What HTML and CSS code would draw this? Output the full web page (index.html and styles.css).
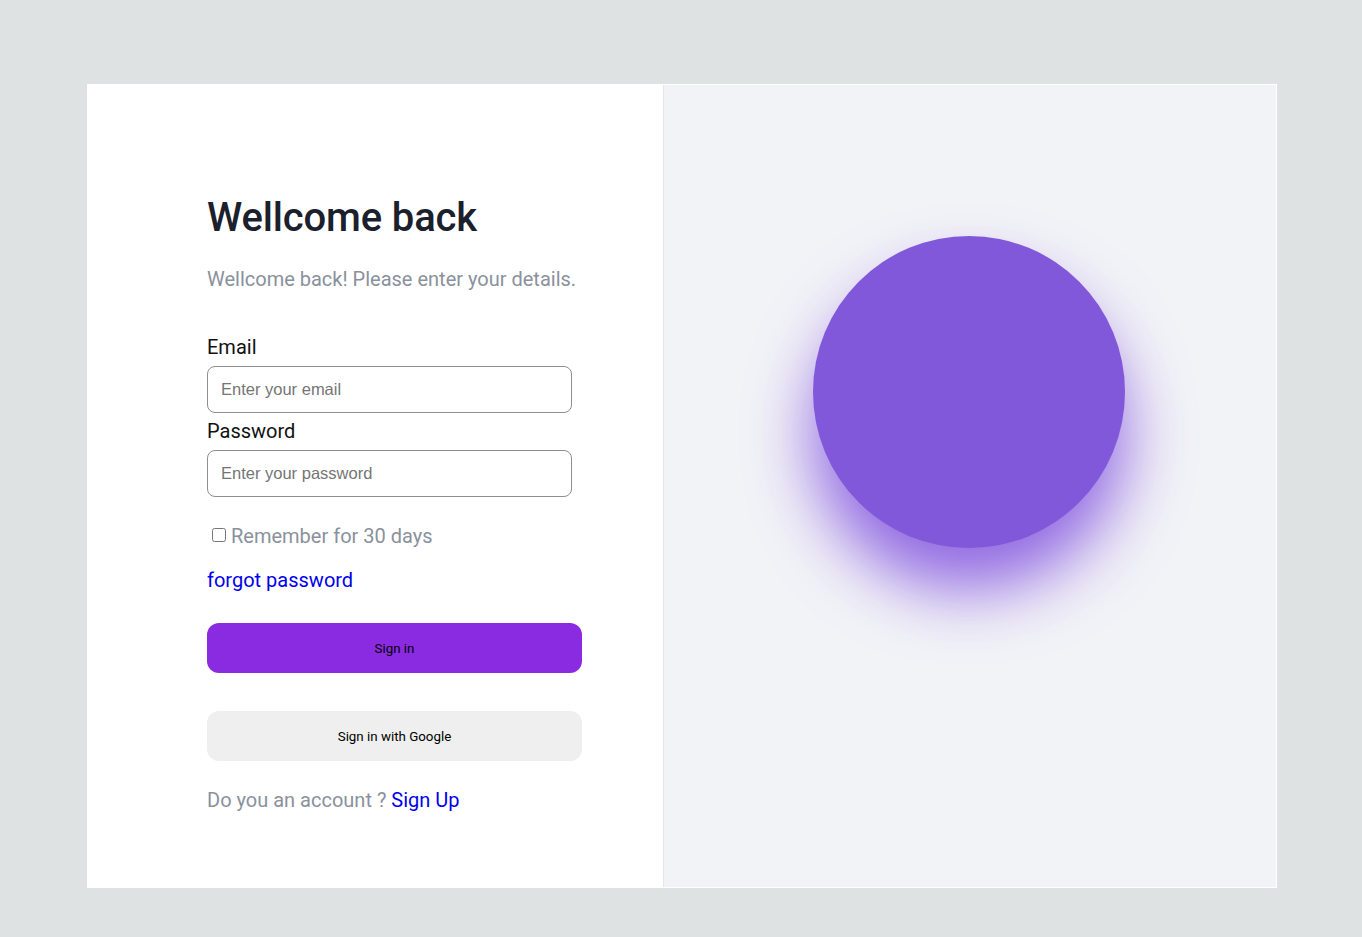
FILE: index.html
```html
<!DOCTYPE html>
<html lang="en">
<head>
<meta charset="utf-8">
<title>Sign in</title>
<link rel="stylesheet" href="styles.css">
</head>
<body>
<main class="card">
  <section class="form-pane">
    <h1 class="title">Wellcome back</h1>
    <p class="subtitle">Wellcome back! Please enter your details.</p>
    <form class="form">
      <label class="label" for="email">Email</label>
      <input class="input" id="email" type="email" placeholder="Enter your email">
      <label class="label" for="password">Password</label>
      <input class="input" id="password" type="password" placeholder="Enter your password">
      <label class="remember"><input type="checkbox" class="check"><span>Remember for 30 days</span></label>
      <a class="link forgot" href="#">forgot password</a>
      <button type="button" class="btn btn-primary">Sign in</button>
      <button type="button" class="btn btn-google">Sign in with Google</button>
      <p class="signup">Do you an account ? <a class="link" href="#">Sign Up</a></p>
    </form>
  </section>
  <section class="art-pane">
    <div class="orb"></div>
  </section>
</main>
</body>
</html>
```

FILE: styles.css
```css
html, body {
  margin: 0;
  padding: 0;
}
body {
  background: #dfe2e3;
  font-family: Roboto, "Liberation Sans", sans-serif;
  min-height: 937px;
}
.card {
  width: 1190px;
  height: 804px;
  margin: 84px 0 0 87px;
  background: #ffffff;
  display: flex;
  box-sizing: border-box;
  padding: 1px 1px 1px 0;
}
.form-pane {
  width: 576px;
  flex: none;
  box-sizing: border-box;
  padding: 109px 0 0 120px;
}
.title {
  margin: 0;
  font-size: 40px;
  line-height: 48px;
  font-weight: 500;
  color: #1a202c;
  letter-spacing: -0.15px;
}
.subtitle {
  margin: 23px 0 0;
  font-size: 20px;
  line-height: 28px;
  color: #8a919d;
}
.form {
  display: flex;
  flex-direction: column;
  align-items: flex-start;
  margin-top: 40px;
}
.label {
  font-size: 20px;
  line-height: 28px;
  color: #111111;
  margin-bottom: 5px;
}
.input {
  width: 365px;
  height: 47px;
  box-sizing: border-box;
  border: 1px solid #8f8f8f;
  border-radius: 8px;
  padding: 0 13px;
  font-family: "Liberation Sans", Arial, sans-serif;
  font-size: 16.5px;
  margin: 0 0 4px;
  background: #fff;
}
.input::placeholder {
  color: #757575;
}
.remember {
  display: flex;
  align-items: center;
  margin-top: 21px;
  font-size: 20px;
  line-height: 28px;
  color: #8a919d;
}
.check {
  width: 14px;
  height: 14px;
  margin: 0 5px 0 5px;
  position: relative;
  top: -1px;
}
.link {
  color: #0000ee;
  text-decoration: none;
}
.forgot {
  margin-top: 16px;
  font-size: 20px;
  line-height: 28px;
}
.btn {
  width: 375px;
  height: 50px;
  border: none;
  border-radius: 12px;
  font-family: Roboto, "Liberation Sans", Arial, sans-serif;
  font-size: 13.333px;
  color: #000;
  cursor: pointer;
}
.btn-primary {
  margin-top: 29px;
  background: #8a2be2;
}
.btn-google {
  margin-top: 38px;
  background: #efefef;
}
.signup {
  margin: 25px 0 0;
  font-size: 20px;
  line-height: 28px;
  color: #8a919d;
}
.art-pane {
  flex: 1;
  background: #f2f3f7;
  border-left: 1px solid #e6e7ea;
  display: flex;
  justify-content: center;
  align-items: flex-start;
  padding-top: 151px;
  padding-right: 2px;
}
.orb {
  width: 312px;
  height: 312px;
  border-radius: 50%;
  background: #8058d9;
  box-shadow: 0 42px 64px rgba(128, 80, 222, 0.85);
}
```
